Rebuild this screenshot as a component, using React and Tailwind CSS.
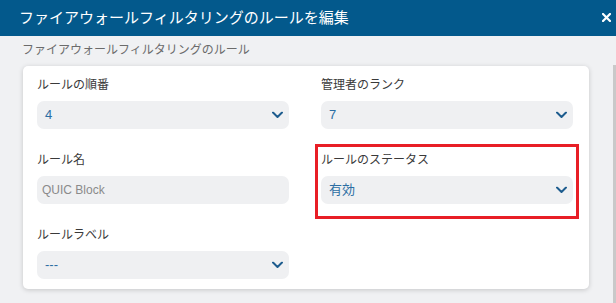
import React from "react";

function Chevron() {
  return (
    <svg width="11" height="7" viewBox="0 0 11 7" className="absolute right-[6px] top-1/2 -translate-y-1/2">
      <path d="M1 1 L5.5 5.5 L10 1" fill="none" stroke="#1d5c8e" strokeWidth="2" strokeLinecap="round" strokeLinejoin="round" />
    </svg>
  );
}

function Field({ label, value, select = true, muted = false, highlight = false }) {
  return (
    <div className="relative">
      {highlight && (
        <div className="absolute -left-[6px] -right-[6px] -top-[8px] -bottom-[15px] border-[3px] border-[#e81e26] pointer-events-none" />
      )}
      <div className="text-[12px] leading-[16px] h-[16px] text-[#3a3a3a] mb-[8px] whitespace-nowrap">{label}</div>
      <div className="relative h-[28px] rounded-[7px] bg-[#eff0f2] flex items-center">
        <span
          className={
            muted
              ? "pl-[5px] text-[12px] text-[#8a8a8a]"
              : "pl-[8px] text-[13px] text-[#2c6ea3]"
          }
        >
          {value}
        </span>
        {select && <Chevron />}
      </div>
    </div>
  );
}

export default function App() {
  return (
    <div className="w-[616px] h-[303px] overflow-hidden bg-[#f0f1f3] font-['Liberation_Sans','Noto_Sans_CJK_JP',sans-serif]">
      <div className="h-[36px] bg-[#03598c] flex items-center justify-between pl-[19px] pr-[5px]">
        <span className="text-white text-[15px] leading-[20px] whitespace-nowrap">ファイアウォールフィルタリングのルールを編集</span>
        <svg width="9" height="9" viewBox="0 0 9 9" className="mt-[-1px]">
          <path d="M1 1 L8 8 M8 1 L1 8" stroke="#ffffff" strokeWidth="2.2" strokeLinecap="square" />
        </svg>
      </div>
      <div className="flex">
        <div className="flex-1">
          <div className="h-[30px] pt-[6px] pl-[22px] text-[12px] leading-[16px] text-[#6b6b6b] whitespace-nowrap">
            ファイアウォールフィルタリングのルール
          </div>
          <div className="ml-[23px] w-[566px] h-[223px] bg-white rounded-[5px] shadow-[0_1px_5px_rgba(0,0,0,0.18)] pt-[11px] pl-[14px] pr-[16px]">
            <div className="grid grid-cols-2 gap-x-[32px] gap-y-[23px]">
              <Field label="ルールの順番" value="4" />
              <Field label="管理者のランク" value="7" />
              <Field label="ルール名" value="QUIC Block" select={false} muted />
              <Field label="ルールのステータス" value="有効" highlight />
              <Field label="ルールラベル" value="---" />
            </div>
          </div>
        </div>
        <div className="w-[3px] mt-[29px] h-[238px] bg-[#c9c9c9]" />
      </div>
    </div>
  );
}
